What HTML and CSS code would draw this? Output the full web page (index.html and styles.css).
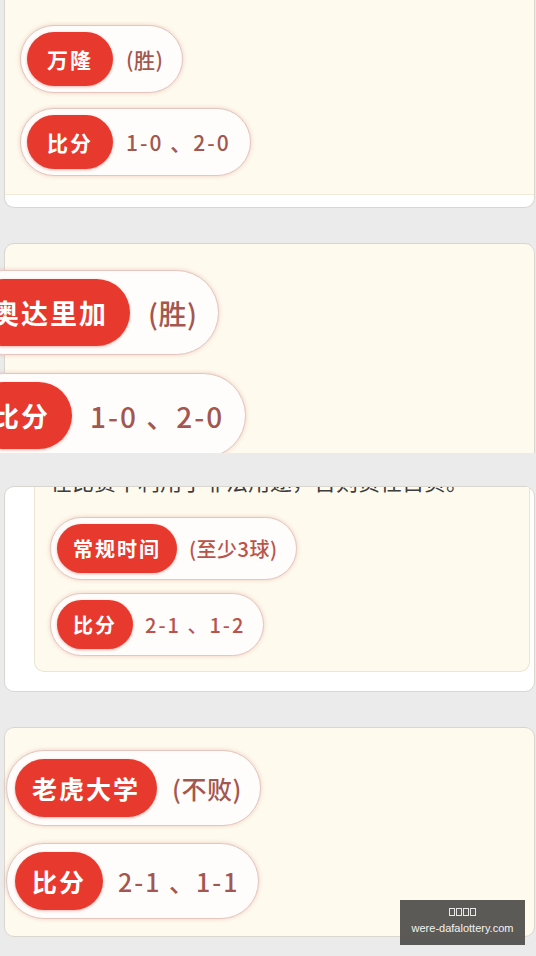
FILE: index.html
```html
<!DOCTYPE html>
<html lang="zh-CN">
<head>
  <meta charset="UTF-8" />
  <meta name="viewport" content="width=device-width, initial-scale=1" />
  <title>比分推荐</title>
  <link rel="stylesheet" href="styles.css">
</head>
<body>

  <!-- 🔹 第一场 -->
  <div class="slice slice-1">
    <div class="card card-top-cut">
      <div class="cream pills pills-s">
        <div class="pill"><span class="tag">万隆</span><span class="val paren">(胜)</span></div>
        <div class="pill"><span class="tag">比分</span><span class="val">1-0 、2-0</span></div>
      </div>
    </div>
  </div>

  <!-- 🔹 第二场 -->
  <div class="slice slice-2">
    <div class="card card-open pills pills-l">
      <div class="pill"><span class="tag">奥达里加</span><span class="val paren">(胜)</span></div>
      <div class="pill"><span class="tag">比分</span><span class="val">1-0 、2-0</span></div>
    </div>
  </div>

  <!-- 🔹 第三场 -->
  <div class="slice slice-3">
    <div class="card card-framed">
      <div class="inner pills pills-m">
        <div class="note">在比赛中利用于非法用途，否则责任自负。</div>
        <div class="pill"><span class="tag">常规时间</span><span class="val paren">(至少3球)</span></div>
        <div class="pill"><span class="tag">比分</span><span class="val">2-1 、1-2</span></div>
      </div>
    </div>
  </div>

  <!-- 🔹 第四场 -->
  <div class="slice slice-4">
    <div class="card card-last pills pills-xl">
      <div class="pill"><span class="tag">老虎大学</span><span class="val paren">(不败)</span></div>
      <div class="pill"><span class="tag">比分</span><span class="val">2-1 、1-1</span></div>
    </div>
  </div>

  <div class="mark">
    <div class="mark-boxes"><i></i><i></i><i></i><i></i></div>
    <div>were-dafalottery.com</div>
  </div>

</body>
</html>
```

FILE: styles.css
```css
body {
  margin: 0;
  width: 536px;
  height: 956px;
  overflow: hidden;
  background: #ebebeb;
  font-family: "Noto Sans CJK SC", "Noto Sans", sans-serif;
  position: relative;
}

.slice { overflow: hidden; }

.slice-1 { height: 208px; }
.slice-2 { height: 210px; margin-top: 35px; }
.slice-3 { height: 206px; margin-top: 33px; }
.slice-4 { height: 229px; margin-top: 35px; }

.card {
  box-sizing: border-box;
  margin-left: 4px;
  margin-right: 1px;
  border: 1px solid #d9d6cf;
  background: #fefaee;
}

/* card whose top is scrolled away */
.card-top-cut {
  margin-top: -12px;
  height: 220px;
  border-top: none;
  border-radius: 0 0 10px 10px;
  background: #fff;
}

.cream {
  box-sizing: border-box;
  height: 207px;
  padding: 37px 0 0 15px;
  background: #fefaee;
  border-bottom: 1px solid #f1ead8;
}

.card-open {
  height: 240px;
  border-radius: 10px 10px 0 0;
  padding-top: 26px;
  padding-left: 0;
}
.card-open .pill { margin-left: -44px; }

.card-framed {
  height: 206px;
  background: #fff;
  border-radius: 10px;
  padding: 0 4px 19px 29px;
}

.inner {
  box-sizing: border-box;
  height: 100%;
  overflow: hidden;
  background: #fefaee;
  border: 1px solid #ece5d1;
  border-top: none;
  border-radius: 0 0 10px 10px;
  padding-left: 15px;
}

.note {
  font-size: 22px;
  line-height: 30px;
  margin-top: -22px;
  margin-bottom: 22px;
  color: #3d3d3d;
  white-space: nowrap;
}

.card-last {
  height: 210px;
  border-radius: 10px;
  padding-top: 22px;
  padding-left: 1px;
}

/* pills */
.pills {
  display: flex;
  flex-direction: column;
  align-items: flex-start;
}

.pill {
  display: inline-flex;
  align-items: center;
  background: #fffdfb;
  border: 1px solid #e4c6bf;
  border-radius: 999px;
  box-shadow: 0 0 4px rgba(214, 150, 138, 0.45);
  padding: var(--pad);
  margin-bottom: var(--gap);
}

.tag {
  display: flex;
  align-items: center;
  height: var(--h);
  padding: 0 var(--tx);
  background: #e8392e;
  color: #fff;
  border-radius: 999px;
  font-size: var(--fs);
  font-weight: 700;
  letter-spacing: 2px;
  box-shadow: 0 1px 3px rgba(190, 50, 40, 0.35);
}

.val {
  margin: 0 var(--end) 0 var(--vgap);
  font-size: var(--vfs);
  font-weight: 500;
  color: #a3574f;
  letter-spacing: 2px;
  white-space: pre;
}

.val.paren { letter-spacing: 0.5px; }

.pills-s  { --pad: 6px; --h: 54px; --tx: 20px; --fs: 21px; --vgap: 13px; --vfs: 21px; --end: 13px; --gap: 15px; }
.pills-l  { --pad: 8px; --h: 67px; --tx: 22px; --fs: 27px; --vgap: 18px; --vfs: 28px; --end: 13px; --gap: 18px; }
.pills-m  { --pad: 6px; --h: 49px; --tx: 16px; --fs: 20px; --vgap: 12px; --vfs: 20px; --end: 12px; --gap: 13px; }
.pills-xl { --pad: 8px; --h: 58px; --tx: 17px; --fs: 25px; --vgap: 15px; --vfs: 25px; --end: 10px; --gap: 17px; }

.pills-m .val { color: #bb534c; }

/* watermark */
.mark {
  position: absolute;
  left: 400px;
  top: 900px;
  width: 125px;
  height: 45px;
  background: rgba(80, 78, 75, 0.93);
  color: #f2f2f2;
  font-family: "Liberation Sans", Arial, sans-serif;
  font-size: 11px;
  text-align: center;
  line-height: 14px;
  padding-top: 8px;
  box-sizing: border-box;
}

.mark-boxes {
  display: flex;
  justify-content: center;
  gap: 1px;
  height: 8px;
  margin-bottom: 5px;
}

.mark-boxes i {
  width: 4px;
  height: 6px;
  border: 1px solid #e6e6e6;
}
```
